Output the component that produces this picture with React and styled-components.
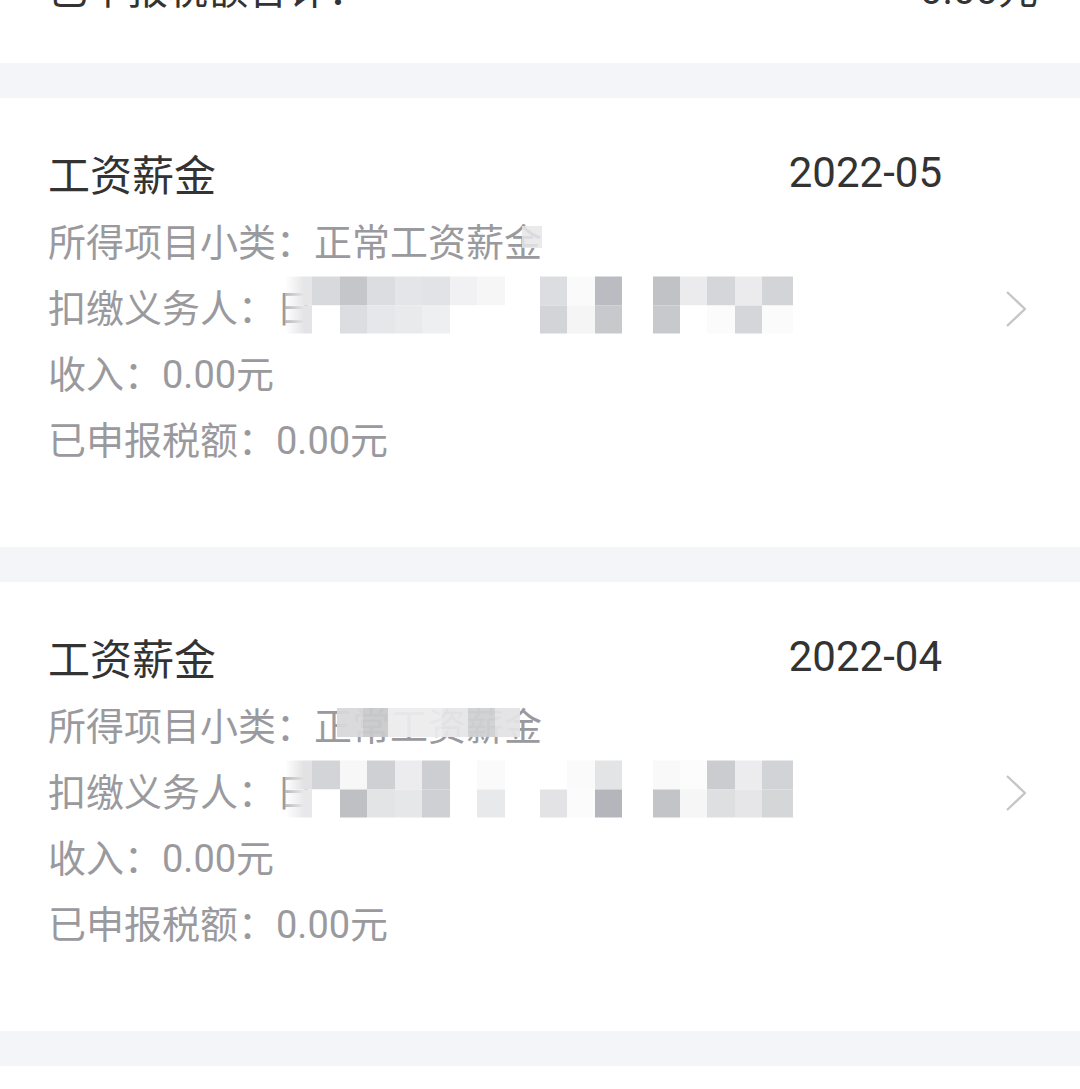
import styled, { createGlobalStyle } from "styled-components";

const GlobalStyle = createGlobalStyle`
  html, body {
    margin: 0;
    padding: 0;
    overflow: hidden;
    background: #ffffff;
  }
  body {
    font-family: Roboto, "Noto Sans CJK SC", sans-serif;
  }
`;

const Page = styled.div`
  width: 1080px;
  height: 1089px;
  overflow: hidden;
  background: #f4f5f9;
  display: flex;
  flex-direction: column;
  gap: 35px;
`;

const SummaryCard = styled.div`
  background: #fff;
  margin-top: -38px;
  padding: 0 42px 51px 48px;
`;

const SummaryRow = styled.div`
  display: flex;
  justify-content: space-between;
  align-items: center;
  height: 50px;
  font-size: 40px;
  color: #333;
`;

const Card = styled.div`
  background: #fff;
  padding: 49px 52px 77px 48px;
  display: flex;
  align-items: center;
  flex-shrink: 0;
`;

const Filler = styled.div`
  background: #fff;
  flex: 1;
`;

const Main = styled.div`
  flex: 1;
  padding-right: 62px;
`;

const Header = styled.div`
  display: flex;
  justify-content: space-between;
  align-items: center;
  height: 50px;
  margin-bottom: 9px;
  font-size: 42px;
  color: #333;
`;

const Detail = styled.div`
  display: flex;
  align-items: center;
  height: 66px;
  font-size: 38px;
  color: #9a9a9e;
  white-space: nowrap;
`;

const Value = styled.span`
  position: relative;
  display: inline-block;
`;

const Mosaic = styled.div`
  position: absolute;
  left: 9px;
  top: 50%;
  transform: translateY(-50%);
  display: grid;
  grid-template-columns: 27px 28px 27px 28px 27px 28px 27px 28px 35px 27px 28px 27px 31px 27px 27px 28px 27px 31px;
  grid-auto-rows: 28.5px;
`;

const Cell = styled.div`
  background: ${(p) => p.$c};
  &:nth-child(18n + 1) {
    background: linear-gradient(90deg, rgba(255, 255, 255, 0.3), ${(p) => p.$c} 70%);
  }
`;

const Smudge = styled.div`
  position: absolute;
  top: ${(p) => p.$top}px;
  left: ${(p) => p.$left}px;
  height: ${(p) => p.$h}px;
  display: flex;
  opacity: ${(p) => p.$o};
`;

const SmudgeCell = styled.div`
  width: ${(p) => p.$w}px;
  background: ${(p) => p.$c};
`;

const Arrow = styled.svg`
  width: 24px;
  height: 40px;
  flex-shrink: 0;
`;

const records = [
  {
    month: "2022-05",
    smudge: { top: 14, left: 208, h: 22, o: 0.85, cells: [[20, "#e6e6e8"]] },
    mosaic: [
      ["#e6e6e8", "#d8d9dc", "#c5c6ca", "#dcdde0", "#e4e5e8", "#e2e3e6", "#f1f1f3", "#f6f6f7", "#fff", "#dcdde0", "#fafafa", "#babcc1", "#fff", "#c0c2c6", "#ebebed", "#d5d6da", "#ebebed", "#d3d4d8"],
      ["#e4e4e6", "#fff", "#dcdde0", "#e6e7ea", "#e9eaec", "#eeeff1", "#fff", "#fff", "#fff", "#d3d4d8", "#f5f5f6", "#c8c9cd", "#fff", "#c8c9cd", "#fff", "#fbfbfb", "#d5d6d9", "#fbfbfb"],
    ],
  },
  {
    month: "2022-04",
    smudge: {
      top: 12,
      left: 23,
      h: 29,
      o: 0.94,
      cells: [[26, "#d8d8da"], [25, "#c9cacc"], [54, "#ececee"], [26, "#e6e6e8"], [27, "#d0d1d3"], [25, "#e3e3e5"]],
    },
    mosaic: [
      ["#e2e2e4", "#d3d4d7", "#f7f7f8", "#cfd0d3", "#ececee", "#cdced1", "#fff", "#fafafa", "#fff", "#fff", "#fafafa", "#e3e4e6", "#fff", "#f9f9f9", "#fcfcfc", "#cbcccf", "#ececee", "#d2d3d6"],
      ["#e8e8ea", "#fff", "#bfc0c4", "#e3e4e6", "#e6e7e9", "#cfd0d3", "#fff", "#e8e9eb", "#fff", "#e3e3e5", "#fbfbfb", "#b5b6bb", "#fff", "#c3c4c8", "#f6f6f6", "#dedfe1", "#e6e6e8", "#d5d6d8"],
    ],
  },
];

const Chevron = () => (
  <Arrow viewBox="0 0 24 40">
    <polyline points="3,3 21,20 3,37" fill="none" stroke="#c6c6c8" strokeWidth="2.4" strokeLinejoin="round" />
  </Arrow>
);

const RecordCard = ({ record }) => (
  <Card>
    <Main>
      <Header>
        <span>工资薪金</span>
        <span>{record.month}</span>
      </Header>
      <Detail>
        所得项目小类：
        <Value>
          正常工资薪金
          <Smudge $top={record.smudge.top} $left={record.smudge.left} $h={record.smudge.h} $o={record.smudge.o}>
            {record.smudge.cells.map(([w, c], i) => (
              <SmudgeCell key={i} $w={w} $c={c} />
            ))}
          </Smudge>
        </Value>
      </Detail>
      <Detail>
        扣缴义务人：
        <Value>
          日
          <Mosaic>
            {record.mosaic.flat().map((c, i) => (
              <Cell key={i} $c={c} />
            ))}
          </Mosaic>
        </Value>
      </Detail>
      <Detail>收入：0.00元</Detail>
      <Detail>已申报税额：0.00元</Detail>
    </Main>
    <Chevron />
  </Card>
);

export default function App() {
  return (
    <>
      <GlobalStyle />
      <Page>
        <SummaryCard>
          <SummaryRow>
            <span>已申报税额合计：</span>
            <span>0.00元</span>
          </SummaryRow>
        </SummaryCard>
        {records.map((r) => (
          <RecordCard key={r.month} record={r} />
        ))}
        <Filler />
      </Page>
    </>
  );
}
